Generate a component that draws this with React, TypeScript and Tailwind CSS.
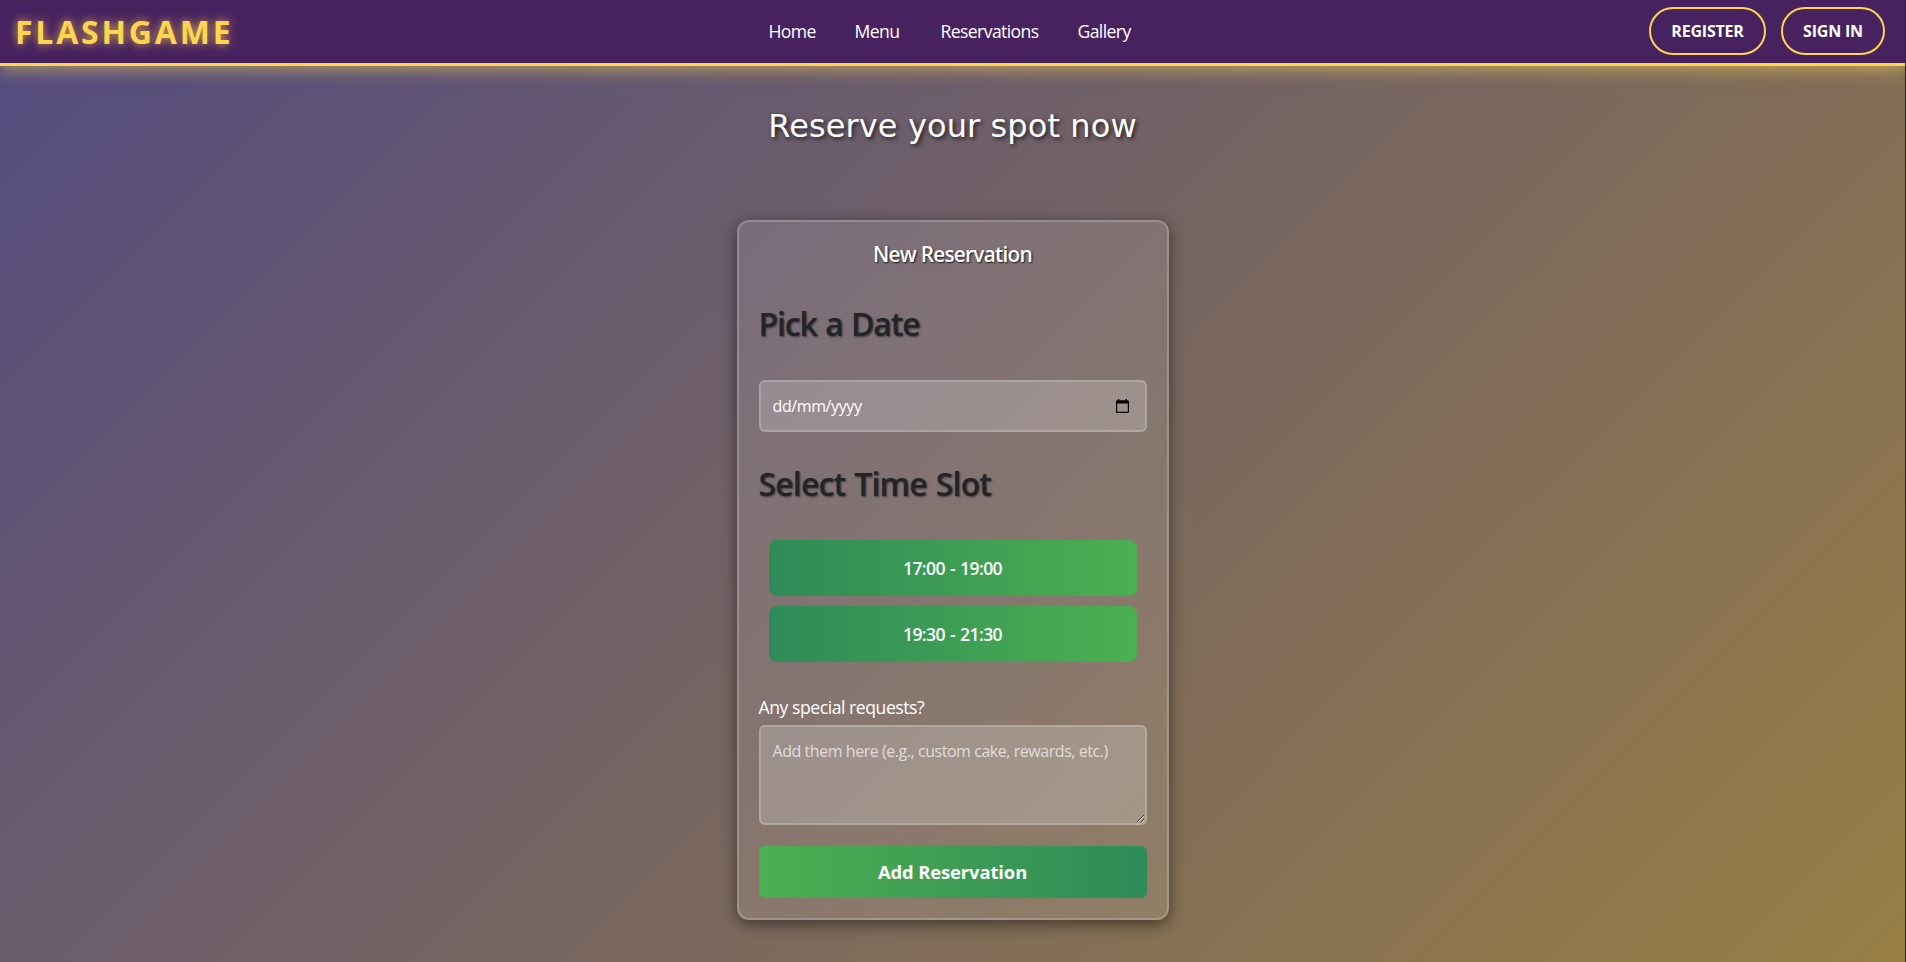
const links = [
  { label: "Home", box: "w-[46px]" },
  { label: "Menu", box: "w-[46px]" },
  { label: "Reservations", box: "w-[97px]" },
  { label: "Gallery", box: "w-[54px]" },
];

const slots = ["17:00 - 19:00", "19:30 - 21:30"];

function Header() {
  return (
    <header className="flex h-[66px] w-full items-center justify-between border-b-[3px] border-[#ffd54f] bg-[#48225f] pl-[15px] pr-5 shadow-[0_4px_15px_rgba(255,213,79,0.5)]">
      <div className="flex flex-1 items-center text-[32px] leading-none font-bold tracking-[2.8px] text-[#ffd54f] [text-shadow:0_0_10px_rgba(255,213,79,0.8)]">
        FLASHGAME
      </div>
      <nav className="flex items-center gap-10 text-[17.6px] tracking-[-0.6px] text-white">
        {links.map((l) => (
          <a key={l.label} className={`${l.box} whitespace-nowrap`}>{l.label}</a>
        ))}
      </nav>
      <div className="-mt-px flex flex-1 justify-end gap-[15px] text-[16px] font-bold tracking-[-0.2px] text-white">
        <button className="h-12 w-[117px] rounded-[25px] border-2 border-[#ffd54f]">REGISTER</button>
        <button className="h-12 w-[104px] rounded-[25px] border-2 border-[#ffd54f]">SIGN IN</button>
      </div>
    </header>
  );
}

function CalendarIcon() {
  return (
    <svg width="13" height="14" viewBox="0 0 13 14" className="mb-px shrink-0">
      <path d="M2 0h1.3v1.300h6.400V0H11v1.300h.7c.7 0 1.300.6 1.300 1.300v10.100c0 .7-.6 1.300-1.300 1.300H1.300C.6 14 0 13.400 0 12.700V2.600c0-.7.6-1.300 1.300-1.300H2zM1.200 4.500v8.300h10.600V4.500z" fill="#000" />
    </svg>
  );
}

function ReservationCard() {
  return (
    <section className="mt-[75px] flex h-[700px] w-[432px] flex-col rounded-xl border-2 border-white/20 bg-white/10 px-5 shadow-[0_4px_15px_rgba(0,0,0,0.5)]">
      <h3 className="mt-[16px] mb-px h-8 text-center text-[20.8px] leading-8 font-semibold tracking-[-0.75px] text-white [text-shadow:1px_1px_2px_rgba(0,0,0,0.8)]">
        New Reservation
      </h3>
      <h2 className="mt-[33px] h-[40px] text-[32px] leading-[40px] font-semibold tracking-[-1.2px] text-[#212529] [text-shadow:1px_1px_2px_rgba(0,0,0,0.5)] [word-spacing:1.5px]">
        Pick a Date
      </h2>
      <div className="mt-[36px] flex h-[52px] items-center justify-between rounded-md border-2 border-white/20 bg-white/20 pl-3 pr-4 text-[16px] tracking-[-0.4px] text-white">
        <span>dd/mm/yyyy</span>
        <CalendarIcon />
      </div>
      <h2 className="mt-[32px] mb-px h-[40px] text-[32px] leading-[40px] font-semibold tracking-[-0.85px] text-[#212529] [text-shadow:1px_1px_2px_rgba(0,0,0,0.5)] [word-spacing:1.5px]">
        Select Time Slot
      </h2>
      <div className="mt-[35px] flex flex-col gap-2.5 px-2.5">
        {slots.map((s) => (
          <button key={s} className="h-14 rounded-lg bg-linear-to-r from-[#2e8b57] to-[#4caf50] text-[17.6px] font-semibold tracking-[-0.6px] text-white [word-spacing:1px]">
            {s}
          </button>
        ))}
      </div>
      <label className="mt-[32px] h-[26px] text-[17.6px] leading-[26px] tracking-[-0.45px] text-white">Any special requests?</label>
      <textarea
        placeholder="Add them here (e.g., custom cake, rewards, etc.)"
        className="mt-[5px] h-[100px] w-full rounded-md border-2 border-white/20 bg-white/20 px-3 py-3 text-[16px] leading-6 tracking-[-0.45px] text-white placeholder:text-white/70"
      />
      <button className="mt-[21px] h-[52px] shrink-0 rounded-md bg-linear-to-r from-[#4caf50] to-[#2e8b57] text-[18.4px] font-bold tracking-[-0.1px] text-white">
        Add Reservation
      </button>
    </section>
  );
}

export default function App() {
  return (
    <div className="flex h-[962px] w-[1906px] overflow-hidden border-r border-[#2c2a1e] bg-[linear-gradient(135deg,#534b80_0%,#987e44_100%)] font-['Open_Sans','Noto_Sans',sans-serif]">
      <div className="flex w-full flex-col items-center">
        <Header />
        <h1 className="mt-[36px] h-[43px] font-['DejaVu_Sans',sans-serif] text-[32px] leading-[48px] tracking-[0.1px] text-white [text-shadow:2px_2px_4px_rgba(0,0,0,0.7)]">
          Reserve your spot now
        </h1>
        <ReservationCard />
      </div>
    </div>
  );
}
